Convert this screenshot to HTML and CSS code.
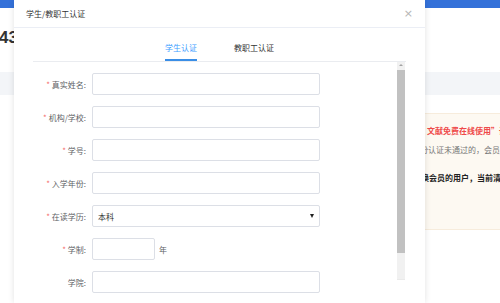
FILE: index.html
```html
<!DOCTYPE html>
<html lang="zh-CN">
<head>
    <meta charset="UTF-8">
    <meta name="viewport" content="width=device-width, initial-scale=1.0">
    <title>学生/教职工认证</title>
    <link rel="stylesheet" href="styles.css">
</head>
<body>
    <div class="page">
        <div class="topbar"></div>
        <div class="stat">43</div>
        <div class="band"></div>
        <div class="notice">
            <p class="notice-red">文献免费在线使用”读者服务</p>
            <p class="notice-gray">份认证未通过的，会员权益</p>
            <p class="notice-bold">换会员的用户，当前清单</p>
        </div>
    </div>

    <div class="modal">
        <div class="modal-header">
            <span class="modal-title">学生/教职工认证</span>
            <span class="modal-close">×</span>
        </div>
        <div class="tabs">
            <span class="tab active">学生认证</span>
            <span class="tab">教职工认证</span>
        </div>
        <div class="modal-body">
            <form class="form">
                <div class="row">
                    <label class="label"><em>*</em> 真实姓名:</label>
                    <input class="field" type="text">
                </div>
                <div class="row">
                    <label class="label"><em>*</em> 机构/学校:</label>
                    <input class="field" type="text">
                </div>
                <div class="row">
                    <label class="label"><em>*</em> 学号:</label>
                    <input class="field" type="text">
                </div>
                <div class="row">
                    <label class="label"><em>*</em> 入学年份:</label>
                    <input class="field" type="text">
                </div>
                <div class="row">
                    <label class="label"><em>*</em> 在读学历:</label>
                    <div class="field select">
                        <span>本科</span>
                        <span class="caret"></span>
                    </div>
                </div>
                <div class="row">
                    <label class="label"><em>*</em> 学制:</label>
                    <input class="field short" type="text">
                    <span class="unit">年</span>
                </div>
                <div class="row">
                    <label class="label">学院:</label>
                    <input class="field" type="text">
                </div>
            </form>
            <div class="scrollbar">
                <div class="sb-button"></div>
                <div class="sb-thumb"></div>
                <div class="sb-track"></div>
            </div>
        </div>
    </div>
</body>
</html>
```

FILE: styles.css
```css
:root {
    --blue: #3471d9;
    --tab-blue: #409eff;
    --text-color: #303133;
    --label-color: #606266;
    --border-color: #dcdfe6;
    --required: #f56c6c;
}
body {
    margin: 0;
    width: 500px;
    height: 303px;
    overflow: hidden;
    position: relative;
    font-family: "Noto Sans CJK SC", "Noto Sans", sans-serif;
    font-size: 8px;
    color: var(--text-color);
    background-color: white;
}
p {
    margin: 0;
}

/* page behind the dialog */
.topbar {
    height: 8px;
    background-color: var(--blue);
}
.stat {
    margin-top: 20px;
    margin-left: -1px;
    height: 20px;
    line-height: 20px;
    font-size: 17px;
    font-weight: 700;
    color: #333;
    font-family: "Liberation Sans", Arial, sans-serif;
}
.band {
    margin-top: 24px;
    height: 23px;
    background-color: #f3f5f8;
}
.notice {
    margin-top: 18px;
    margin-left: 423px;
    height: 117px;
    padding-top: 11px;
    box-sizing: border-box;
    background-color: #fdf9f2;
    border: 1px solid #f7ecdc;
    border-right: none;
    white-space: nowrap;
    overflow: hidden;
    line-height: 12px;
}
.notice-red {
    padding-left: 3px;
    color: #ef4a4a;
    font-weight: 700;
}
.notice-gray {
    margin-top: 7px;
    margin-left: -4px;
    color: #777;
}
.notice-bold {
    margin-top: 16px;
    margin-left: -3px;
    color: #222;
    font-weight: 700;
}

/* dialog */
.modal {
    position: absolute;
    left: 14px;
    top: 0;
    width: 411px;
    height: 303px;
    background-color: white;
    box-shadow: 0 0 6px rgba(0, 0, 0, 0.12);
}
.modal-header {
    height: 27px;
    padding: 0 12px;
    border-bottom: 1px solid #ebeef5;
    display: flex;
    align-items: center;
    justify-content: space-between;
}
.modal-title {
    font-size: 8px;
    color: #333;
}
.modal-close {
    font-size: 11px;
    color: #b5b5b5;
    font-family: "DejaVu Sans", sans-serif;
}
.tabs {
    margin: 0 19px;
    padding-top: 14px;
    display: flex;
    justify-content: center;
    gap: 37px;
    border-bottom: 1px solid #eaecf0;
}
.tab {
    line-height: 12px;
    padding-bottom: 5px;
    border-bottom: 2px solid transparent;
    color: #333;
}
.tab.active {
    color: var(--tab-blue);
    border-bottom-color: #3a8ee6;
}
.modal-body {
    margin: 0 19px;
    display: flex;
}
.form {
    flex: 1;
    padding-top: 11px;
}
.row {
    display: flex;
    align-items: center;
    height: 22px;
    margin-bottom: 11px;
}
.label {
    width: 59px;
    padding-right: 6px;
    box-sizing: border-box;
    text-align: right;
    color: var(--label-color);
    white-space: nowrap;
}
.label em {
    font-style: normal;
    color: var(--required);
}
.field {
    width: 228px;
    height: 22px;
    box-sizing: border-box;
    margin: 0;
    padding: 0 5px;
    border: 1px solid var(--border-color);
    border-radius: 2px;
    font-family: inherit;
    font-size: 8px;
    color: #333;
    background-color: white;
    outline: none;
}
.field.short {
    width: 63px;
}
.select {
    display: flex;
    align-items: center;
    justify-content: space-between;
}
.caret {
    width: 0;
    height: 0;
    border-left: 2.5px solid transparent;
    border-right: 2.5px solid transparent;
    border-top: 4px solid #222;
}
.unit {
    margin-left: 4px;
    color: var(--label-color);
}

/* fake scrollbar */
.scrollbar {
    width: 8px;
    margin-right: 1px;
    display: flex;
    flex-direction: column;
    height: 218px;
}
.sb-button {
    height: 8px;
    background-color: #f1f1f1;
    position: relative;
}
.sb-button::after {
    content: "";
    position: absolute;
    left: 2px;
    top: 2px;
    border-left: 2px solid transparent;
    border-right: 2px solid transparent;
    border-bottom: 2px solid #a3a3a3;
}
.sb-thumb {
    height: 183px;
    background-color: #c1c1c1;
}
.sb-track {
    flex: 1;
    background-color: #f1f1f1;
    border-bottom: 1px solid #eaeaea;
}
```
